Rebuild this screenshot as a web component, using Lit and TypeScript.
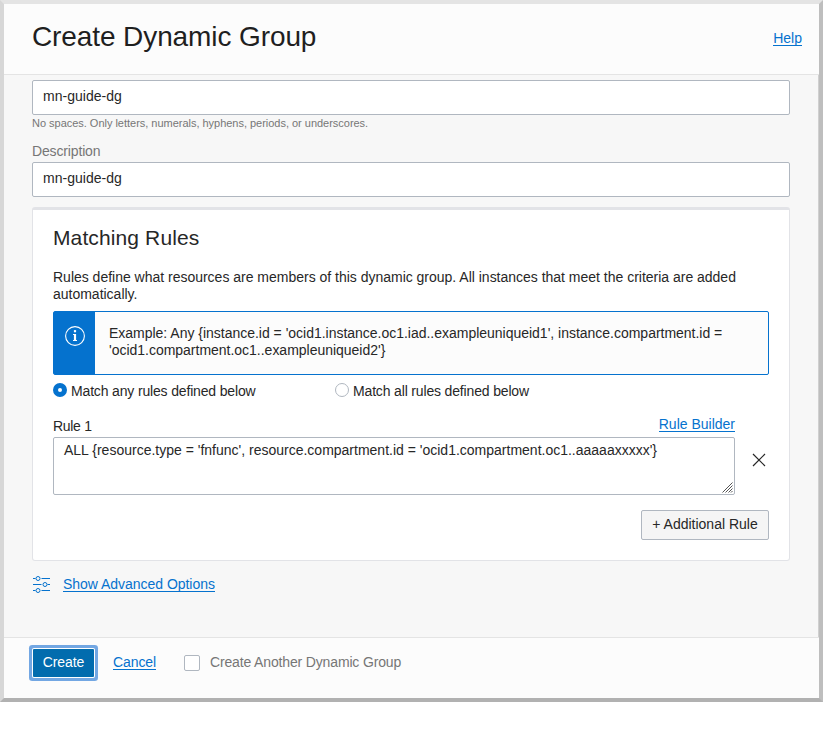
import { LitElement, html, css } from "lit";
import { customElement, state } from "lit/decorators.js";

@customElement("app-root")
export class AppRoot extends LitElement {
  static styles = css`
    :host {
      display: block;
      min-height: 100vh;
      background: #fff;
      color: #272727;
      font: 14px/17px "Liberation Sans", Arial, sans-serif;
    }
    * { box-sizing: border-box; }
    .dialog {
      display: flex;
      flex-direction: column;
      width: 823px;
      height: 702px;
      border: 4px solid;
      border-color: #e4e4e4 #bebebe #b1b1b1 #d7d7d7;
      background: #fcfcfc;
    }
    .header {
      display: flex;
      justify-content: space-between;
      height: 71px;
      padding: 0 17px 0 28px;
      border-bottom: 1px solid #e4e4e4;
    }
    h1 {
      margin: 17px 0 0;
      font-weight: 400;
      font-size: 28px;
      line-height: 32px;
      letter-spacing: -0.1px;
      color: #1f1f1f;
    }
    a {
      color: #0572ce;
      text-decoration: none;
      border-bottom: 1px solid #0572ce;
      line-height: 17px;
      height: 16px;
      white-space: nowrap;
    }
    .help { margin-top: 26px; }
    .body {
      height: 562px;
      padding: 5px 28px 0;
      border-right: 1px solid #d0d0d0;
      background: #f7f7f7;
    }
    .field {
      height: 35px;
      border: 1px solid #b0b7c0;
      border-radius: 2px;
      background: #fff;
      padding: 7px 10px;
      letter-spacing: 0.03px;
    }
    .hint {
      margin-top: 2px;
      font-size: 11px;
      line-height: 13px;
      letter-spacing: -0.02px;
      color: #767676;
    }
    .label { display: block; margin: 13px 0 2px; color: #767676; letter-spacing: -0.15px; }
    .card {
      height: 354px;
      margin-top: 10px;
      padding: 16px 20px 0;
      border: 1px solid #e2e3e7;
      border-top-width: 3px;
      border-radius: 3px;
      background: #fff;
    }
    h2 {
      margin: 0;
      font-weight: 400;
      font-size: 21px;
      line-height: 24px;
      letter-spacing: 0.12px;
    }
    p { margin: 19px 0 0; height: 42px; white-space: nowrap; letter-spacing: -0.01px; }
    .info {
      display: flex;
      height: 64px;
      border: 1px solid #0572ce;
      border-radius: 2px;
      background: #fcfcfc;
    }
    .info-side {
      display: flex;
      justify-content: center;
      width: 41px;
      padding-top: 14px;
      background: #0572ce;
    }
    .info-text { padding: 13px 0 0 14px; white-space: nowrap; letter-spacing: -0.015px; }
    .radios { display: flex; margin-top: 8px; height: 17px; letter-spacing: -0.16px; }
    .radio { display: flex; width: 282px; gap: 4px; }
    .dot {
      width: 14px;
      height: 14px;
      border-radius: 50%;
      border: 1px solid #b0b7c0;
      background: #fff;
    }
    .dot.on { border: 5px solid #0572ce; }
    .rule-head {
      display: flex;
      justify-content: space-between;
      width: 682px;
      height: 21px;
      margin-top: 16px;
    }
    .rule-name { padding-top: 2px; letter-spacing: -0.3px; }
    .rule-row { display: flex; gap: 17px; }
    .remove { margin-top: 16px; }
    .area {
      display: flex;
      justify-content: space-between;
      width: 682px;
      height: 58px;
      border: 1px solid #b0b7c0;
      border-radius: 2px;
      padding: 4px 1px 1px 10px;
      white-space: nowrap;
    }
    .grip { align-self: flex-end; }
    .actions { display: flex; justify-content: flex-end; margin-top: 15px; }
    .add {
      width: 128px;
      height: 30px;
      border: 1px solid #b0b7c0;
      border-radius: 2px;
      background: #f5f5f5;
      text-align: center;
      padding-top: 5px;
    }
    .advanced { display: flex; gap: 12px; margin-top: 14px; }
    .advanced a { margin-top: 1px; letter-spacing: -0.03px; }
    .footer {
      display: flex;
      flex: 1;
      padding: 11px 0 0 29px;
      border-top: 1px solid #e4e4e4;
    }
    .create {
      width: 61px;
      height: 28px;
      border-radius: 1px;
      background: #026cae;
      box-shadow: 0 0 0 1px #fff, 0 0 0 4px #73a7e3;
      color: #fff;
      text-align: center;
      padding-top: 5px;
      letter-spacing: -0.1px;
    }
    .cancel { margin: 5px 28px 0 19px; letter-spacing: -0.1px; }
    .check {
      width: 16px;
      height: 16px;
      margin: 6px 10px 0 0;
      border: 1px solid #b0b7c0;
      border-radius: 2px;
      background: #fff;
    }
    .another { padding-top: 5px; color: #767676; letter-spacing: -0.15px; }
    svg { display: block; flex: none; }
  `;

  @state() private name = "mn-guide-dg";
  @state() private description = "mn-guide-dg";
  @state() private match = "any";
  @state() private rule =
    "ALL {resource.type = 'fnfunc', resource.compartment.id = 'ocid1.compartment.oc1..aaaaaxxxxx'}";

  private radio(value: string) {
    return html`<div class="radio" @click=${() => (this.match = value)}>
      <span class="dot ${this.match === value ? "on" : ""}"></span>
      <span>Match ${value} rules defined below</span>
    </div>`;
  }

  render() {
    return html`
      <div class="dialog">
        <div class="header">
          <h1>Create Dynamic Group</h1>
          <a class="help">Help</a>
        </div>
        <div class="body">
          <div class="field">${this.name}</div>
          <div class="hint">No spaces. Only letters, numerals, hyphens, periods, or underscores.</div>
          <span class="label">Description</span>
          <div class="field">${this.description}</div>
          <div class="card">
            <h2>Matching Rules</h2>
            <p>Rules define what resources are members of this dynamic group. All instances that meet the criteria are added<br />automatically.</p>
            <div class="info">
              <div class="info-side">
                <svg width="20" height="20" viewBox="0 0 20 20" fill="none" stroke="#fff">
                  <circle cx="10" cy="10" r="9.4" stroke-width="1.1" />
                  <path d="M8 8.5h2v6M8 14.5h4" stroke-width="1" />
                  <path d="M10 8v6.8" stroke-width="2.2" />
                  <path d="M8.9 5.2h2.2" stroke-width="2.2" />
                </svg>
              </div>
              <div class="info-text">Example: Any {instance.id = 'ocid1.instance.oc1.iad..exampleuniqueid1', instance.compartment.id =<br />'ocid1.compartment.oc1..exampleuniqueid2'}</div>
            </div>
            <div class="radios">${this.radio("any")}${this.radio("all")}</div>
            <div class="rule-head">
              <span class="rule-name">Rule 1</span>
              <a>Rule Builder</a>
            </div>
            <div class="rule-row">
              <div class="area">
                <span>${this.rule}</span>
                <svg class="grip" width="11" height="11" viewBox="0 0 11 11" stroke="#555" stroke-width="1">
                  <path d="M.5 10.5l10-10M3.5 10.5l7-7M6.5 10.5l4-4M9 10.5l1.5-1.5" />
                </svg>
              </div>
              <svg class="remove" width="14" height="14" viewBox="0 0 14 14" stroke="#272727" stroke-width="1.2">
                <path d="M1 1l12 12M13 1L1 13" />
              </svg>
            </div>
            <div class="actions"><div class="add">+ Additional Rule</div></div>
          </div>
          <div class="advanced">
            <svg width="19" height="20" viewBox="0 0 19 20" fill="none" stroke="#0572ce">
              <path d="M1 3.5h2.5M9.5 3.5H18M1 9.5h8.5M15.5 9.5H18M1 15.5h2.5M9.5 15.5H18" />
              <circle cx="6" cy="3.5" r="2" />
              <circle cx="13" cy="9.5" r="2" />
              <circle cx="6" cy="15.5" r="2" />
            </svg>
            <a>Show Advanced Options</a>
          </div>
        </div>
        <div class="footer">
          <div class="create">Create</div>
          <a class="cancel">Cancel</a>
          <span class="check"></span>
          <span class="another">Create Another Dynamic Group</span>
        </div>
      </div>
    `;
  }
}
